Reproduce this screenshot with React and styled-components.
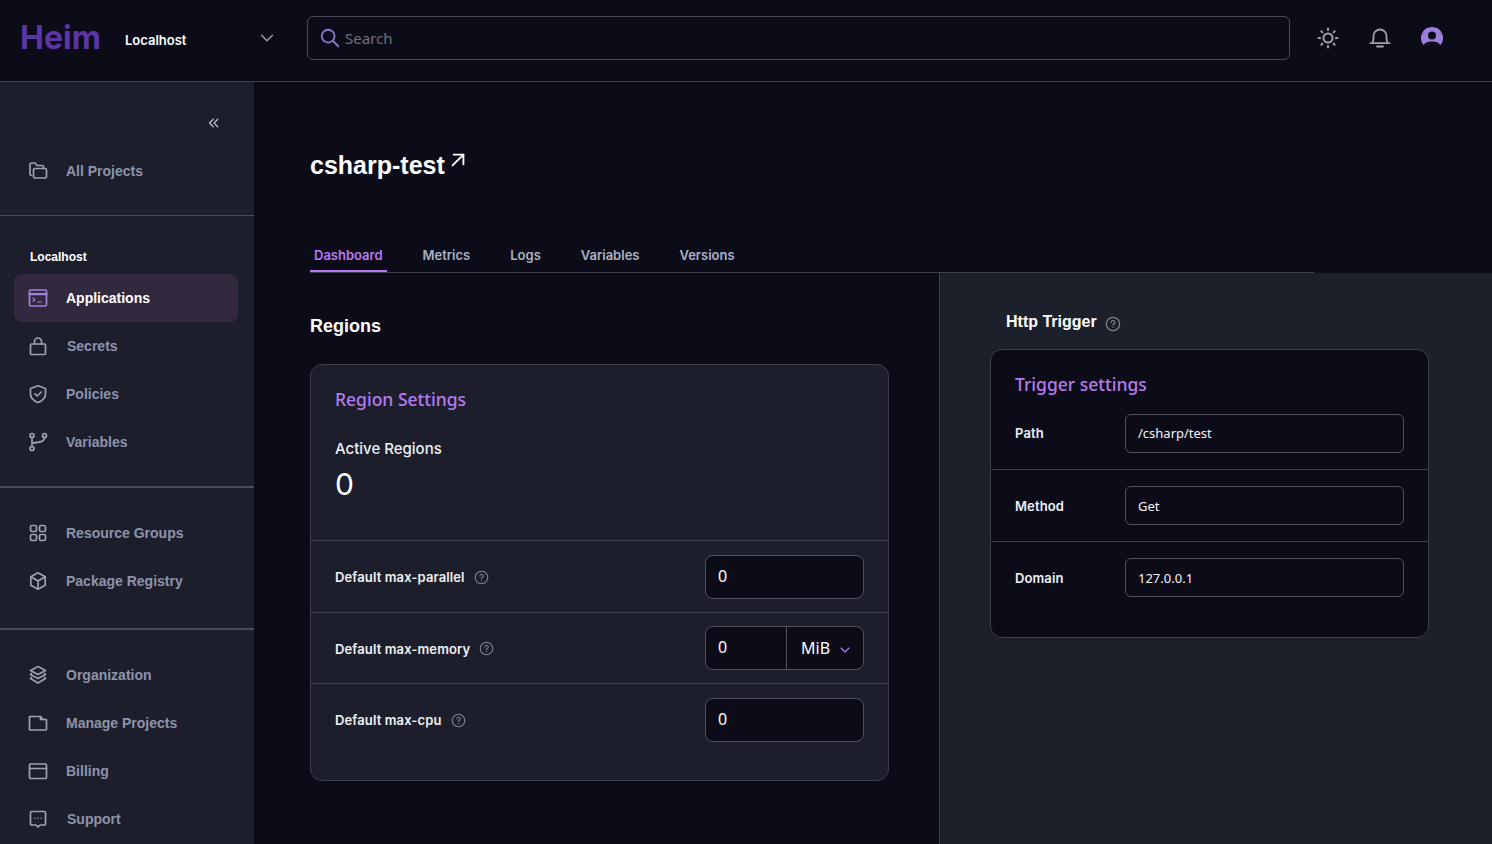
import React from "react";
import styled, { createGlobalStyle } from "styled-components";
import { TbChevronDown, TbChevronsLeft, TbSearch, TbArrowUpRight } from "react-icons/tb";

const Global = createGlobalStyle`
  html, body { margin: 0; padding: 0; height: 100%; overflow: hidden; background: #0c0c18; }
  * { box-sizing: border-box; }
  body { font-family: Inter, "Liberation Sans", sans-serif; color: #fff; }
`;
const ARIAL = `"Liberation Sans", Inter, sans-serif`;
const NOTO = `"Noto Sans", Inter, sans-serif`;

const Page = styled.div`display: flex; flex-direction: column; height: 844px; overflow: hidden;`;
const Header = styled.header`
  flex: none; height: 82px; padding-bottom: 6px; display: flex; align-items: center; border-bottom: 1px solid #3f3f4c; background: #0c0c18;
`;
const Logo = styled.div`width: 125px; padding-left: 20px; font-size: 32px; font-weight: 700; color: #5a35a6;`;
const EnvPicker = styled.div`
  width: 182px; padding: 4px 29px 0 0; display: flex; align-items: center; justify-content: space-between;
  font-size: 13px; font-weight: 600;
  svg { color: #a0a0ac; margin-top: -4px; stroke-width: 1.5; }
`;
const SearchBox = styled.div`
  width: 983px; height: 44px; display: flex; align-items: center; gap: 4px; padding: 0 11px;
  border: 1px solid #4a4a56; border-radius: 6px; color: #70707c; font-size: 15px; font-family: ${NOTO};
  svg { color: #8f74d0; }
`;
const HeaderIcons = styled.div`
  margin-left: 26px; display: flex; gap: 28px; color: #a1a1ad;
  svg { display: block; }
`;
const Body = styled.div`flex: 1; min-height: 0; display: flex;`;
const Sidebar = styled.aside`flex: none; width: 254px; background: #1c1f2b; display: flex; flex-direction: column;`;
const Collapse = styled.div`
  height: 65px; display: flex; justify-content: flex-end; align-items: flex-end; padding: 0 31px 15px 0; color: #c4c4cc;
  svg { stroke-width: 1.6; }
`;
const Section = styled.div`
  padding: ${p => p.$pad}; border-bottom: ${p => p.$line || 0}px solid #4a4a58;
`;
const SectionLabel = styled.div`
  padding: 0 0 0 30px; height: 18px; line-height: 18px; font-size: 12px; font-weight: 700; margin-bottom: 8px; font-family: ${ARIAL};
`;
const NavItem = styled.div`
  height: 48px; width: 224px; margin-left: 14px; display: flex; align-items: center; gap: 18px; padding-left: 14px;
  border-radius: 8px; font-size: 14px; font-weight: 700; font-family: ${ARIAL};
  color: ${p => (p.$active ? "#fff" : "#8e93ab")};
  background: ${p => (p.$active ? "#33293f" : "transparent")};
  svg { flex: none; color: ${p => (p.$active ? "#a181de" : "#a0a0ad")}; }
`;
const NavText = styled.span`margin-left: ${p => p.$nudge || 0}px;`;
const Main = styled.main`flex: 1; min-width: 0; display: flex; flex-direction: column;`;
const TitleRow = styled.div`
  flex: none; height: 160px; padding: 67px 0 0 56px; display: flex; align-items: flex-start;
`;
const Title = styled.h1`margin: 0; font-size: 25px; line-height: 32px; font-weight: 700; font-family: ${ARIAL};`;
const TitleLink = styled.span`
  margin: -2px 0 0 0; color: #fff; svg { display: block; stroke-width: 1.7; }
`;
const Tabs = styled.nav`
  flex: none; margin-left: 56px; width: 1004px; height: 31px; display: flex; gap: 32px; border-bottom: 1px solid #3f3f4c;
`;
const Tab = styled.div`
  height: 30px; padding: 4px 4px 0; font-size: 13px; line-height: 18px; font-weight: 600;
  color: ${p => (p.$active ? "#b77af0" : "#a9b3c6")};
  border-bottom: 2px solid ${p => (p.$active ? "#b77af0" : "transparent")};
`;
const Split = styled.div`flex: 1; min-height: 0; display: flex;`;
const Left = styled.section`flex: none; width: 685px; padding: 40px 50px 0 56px;`;
const Right = styled.section`
  flex: 1; min-width: 0; background: #1c202b; border-left: 1px solid #3f3f4c; padding: 36px 63px 0 50px;
`;
const H2 = styled.h2`margin: 0 0 25px; font-size: 18px; line-height: 26px; font-weight: 700; font-family: ${ARIAL};`;
const Card = styled.div`
  border: 1px solid #3f3f4c; border-radius: 12px; overflow: hidden; background: ${p => p.$bg};
  height: ${p => p.$h}px;
`;
const CardTitle = styled.div`font-size: 17.5px; line-height: 24px; font-weight: 500; color: #b77af0; font-family: ${NOTO};`;
const CardHead = styled.div`height: 175px; padding: 22px 24px 0;`;
const StatLabel = styled.div`margin-top: 26px; font-size: 15px; line-height: 24px; font-weight: 500; color: #eef0f4;`;
const StatValue = styled.div`font-size: 30px; line-height: 46px; font-weight: 400;`;
const SetRow = styled.div`
  height: ${p => p.$h}px; padding: 0 24px; display: flex; align-items: center; justify-content: space-between;
  border-top: 1px solid #3f3f4c;
`;
const SetLabel = styled.div`
  display: flex; align-items: center; gap: 9px; font-size: 13px; font-weight: 600; color: #eef0f4; margin-top: 1px; letter-spacing: 0.12px;
  svg { color: #83838f; display: block; }
`;
const NumInput = styled.div`
  width: 159px; height: 44px; border: 1px solid #52525e; border-radius: 8px; background: #0c0c18;
  display: flex; align-items: center; font-size: 16px; overflow: hidden; font-family: ${NOTO};
`;
const NumValue = styled.span`flex: 1; padding: 0 0 2px 12px;`;
const Unit = styled.span`
  flex: none; width: 77px; height: 100%; display: flex; align-items: center; gap: 7px; padding-left: 14px; border-left: 1px solid #52525e; font-size: 16px;
  svg { color: #b77af0; margin-top: 3px; stroke-width: 1.6; }
`;
const TriggerHead = styled.div`
  display: flex; align-items: center; gap: 8px; margin: 0 0 14px 16px; height: 26px;
  font-size: 16px; font-weight: 700; font-family: ${ARIAL};
  svg { color: #83838f; display: block; margin-top: 3px; }
`;
const TriggerTitleWrap = styled.div`height: 63px; padding: 22px 24px 0;`;
const TriggerRow = styled.div`
  display: grid; grid-template-columns: 110px 1fr; align-items: center; padding: 0 24px; height: ${p => p.$h}px;
  border-top: ${p => (p.$line ? "1px solid #3f3f4c" : "0")}; padding-bottom: ${p => p.$pb || 0}px;
`;
const TriggerLabel = styled.div`font-size: 13px; font-weight: 600; color: #eef0f4; letter-spacing: 0.12px;`;
const TextField = styled.div`
  height: 39px; border: 1px solid #52525e; border-radius: 6px; padding: 0 12px; display: flex; align-items: center; font-size: 13px; color: #f4f4f6; font-family: ${NOTO};
`;

const stroke = { fill: "none", stroke: "currentColor", strokeWidth: 1.7, strokeLinecap: "round", strokeLinejoin: "round" };
const Icon = ({ children }) => <svg width="20" height="20" viewBox="0 0 20 20" {...stroke}>{children}</svg>;

const Folders = () => (
  <Icon>
    <path d="M3.5 14.5A1.5 1.5 0 0 1 2 13V3.5A1.5 1.5 0 0 1 3.5 2H7l2 2.5h5A1.5 1.5 0 0 1 15.5 6v1.5" />
    <rect x="5.5" y="7.5" width="13" height="9.5" rx="1.5" />
  </Icon>
);
const Terminal = () => (
  <Icon>
    <rect x="1.5" y="2" width="17" height="16" rx="1.5" />
    <path d="M1.5 6.2h17" strokeWidth="2.2" />
    <path d="M5 10l2 1.7-2 1.7M9.5 14h4" strokeWidth="1.2" />
  </Icon>
);
const Bag = () => (
  <Icon>
    <rect x="2.5" y="8" width="15" height="10.5" rx="1" />
    <path d="M6.5 8V5.5a3.5 3.5 0 0 1 7 0V8" />
  </Icon>
);
const Shield = () => (
  <Icon>
    <path d="M10 1.8l7.5 2.7V10c0 4.5-3.5 7-7.5 8.5-4-1.5-7.5-4-7.5-8.5V4.5z" />
    <path d="M7 9.8l2.2 2.2 4-4" />
  </Icon>
);
const Branch = () => (
  <Icon>
    <circle cx="4" cy="3.5" r="2" /><circle cx="16.5" cy="3.5" r="2" /><circle cx="4" cy="16.5" r="2" />
    <path d="M4 5.5v9M16.5 5.5c0 3.5-3 5-12.5 5.5" />
  </Icon>
);
const Grid = () => (
  <Icon>
    <rect x="2.5" y="2.5" width="6" height="6" rx="1.5" /><rect x="11.5" y="2.5" width="6" height="6" rx="1.5" />
    <rect x="2.5" y="11.5" width="6" height="6" rx="1.5" /><rect x="11.5" y="11.5" width="6" height="6" rx="1.5" />
  </Icon>
);
const Cube = () => (
  <Icon>
    <path d="M10 1.8l7.2 4v8.4l-7.2 4-7.2-4V5.800z" />
    <path d="M2.800 5.800L10 10l7.200-4.200M10 10v8.200" />
  </Icon>
);
const Layers = () => (
  <Icon>
    <path d="M10 1.500l7.500 4-7.500 4-7.500-4z" />
    <path d="M3.500 8.500L2.500 9.500l7.500 4 7.500-4-1-1" />
    <path d="M3.500 12.500l-1 1 7.500 4.500 7.500-4.500-1-1" />
  </Icon>
);
const FolderCorner = () => (
  <Icon>
    <path d="M1.500 3.500h11l3 3h3v9.500a1 1 0 0 1-1 1H2.500a1 1 0 0 1-1-1z" />
    <path d="M12.500 3.500v3h3" />
  </Icon>
);
const Billing = () => (
  <Icon>
    <rect x="1.500" y="3" width="17" height="14.500" rx="1" /><path d="M1.500 7.500h17" />
  </Icon>
);
const Support = () => (
  <Icon>
    <path d="M3.500 2.500h13a1 1 0 0 1 1 1V15a1 1 0 0 1-1 1H12l-2 2-2-2H3.500a1 1 0 0 1-1-1V3.500a1 1 0 0 1 1-1z" />
    <path d="M7 9.200h0M10 9.200h0M13 9.200h0" strokeWidth="1.500" />
  </Icon>
);
const Sun = () => (
  <svg width="24" height="24" viewBox="0 0 24 24" fill="none" stroke="currentColor" strokeWidth="2" strokeLinecap="round">
    <circle cx="12" cy="12" r="4.500" />
    <path d="M12 2.500v1.500M12 20v1.500M2.500 12H4M20 12h1.500M5.300 5.300l1.100 1.100M17.600 17.600l1.100 1.100M5.300 18.700l1.100-1.100M17.600 6.400l1.100-1.100" />
  </svg>
);
const Bell = () => (
  <svg width="24" height="24" viewBox="0 0 24 24" fill="none" stroke="currentColor" strokeWidth="1.800" strokeLinecap="round">
    <path d="M4.500 17c1-1.500 1-3 1-7a6.500 6.500 0 0 1 13 0c0 4 0 5.500 1 7" />
    <path d="M2.500 17.200h19M9 20.500h6" />
  </svg>
);
const Avatar = () => (
  <svg width="24" height="24" viewBox="0 0 24 24">
    <path fill="#9b7fdc" d="M12 1a11 11 0 0 0-8.300 18.200C5 16.700 8 15.600 12 15.600s7 1.100 8.300 3.600A11 11 0 0 0 12 1z" />
    <circle cx="12" cy="9.500" r="4" fill="#0c0c18" />
  </svg>
);
const Help = ({ size = 16 }) => (
  <svg width={size} height={size} viewBox="0 0 16 16" fill="none" stroke="currentColor" strokeWidth="1.200" strokeLinecap="round">
    <circle cx="8" cy="8" r="6.700" />
    <path d="M6.300 6.300a1.800 1.800 0 1 1 2.600 1.600c-.6.300-.9.700-.9 1.300M8 11.300v.1" />
  </svg>
);

const Row = ({ icon, children, active, nudge }) => (
  <NavItem $active={active}>{icon}<NavText $nudge={nudge}>{children}</NavText></NavItem>
);

export default function App() {
  return (
    <Page>
      <Global />
      <Header>
        <Logo>Heim</Logo>
        <EnvPicker><span>Localhost</span><TbChevronDown size={22} /></EnvPicker>
        <SearchBox><TbSearch size={22} /><span>Search</span></SearchBox>
        <HeaderIcons><Sun /><Bell /><Avatar /></HeaderIcons>
      </Header>
      <Body>
        <Sidebar>
          <Collapse><TbChevronsLeft size={18} /></Collapse>
          <Section $pad="0 0 20px" $line={1}><Row icon={<Folders />}>All Projects</Row></Section>
          <Section $pad="32px 0 20px" $line={2}>
            <SectionLabel>Localhost</SectionLabel>
            <Row active icon={<Terminal />}>Applications</Row>
            <Row nudge={1} icon={<Bag />}>Secrets</Row>
            <Row icon={<Shield />}>Policies</Row>
            <Row icon={<Branch />}>Variables</Row>
          </Section>
          <Section $pad="21px 0 23px" $line={2}>
            <Row icon={<Grid />}>Resource Groups</Row>
            <Row icon={<Cube />}>Package Registry</Row>
          </Section>
          <Section $pad="21px 0 0">
            <Row icon={<Layers />}>Organization</Row>
            <Row icon={<FolderCorner />}>Manage Projects</Row>
            <Row icon={<Billing />}>Billing</Row>
            <Row nudge={1} icon={<Support />}>Support</Row>
          </Section>
        </Sidebar>
        <Main>
          <TitleRow>
            <Title>csharp-test</Title>
            <TitleLink><TbArrowUpRight size={26} /></TitleLink>
          </TitleRow>
          <Tabs>
            <Tab $active>Dashboard</Tab><Tab>Metrics</Tab><Tab>Logs</Tab><Tab>Variables</Tab><Tab>Versions</Tab>
          </Tabs>
          <Split>
            <Left>
              <H2>Regions</H2>
              <Card $bg="#1c1f2b" $h={417}>
                <CardHead>
                  <CardTitle>Region Settings</CardTitle>
                  <StatLabel>Active Regions</StatLabel>
                  <StatValue>0</StatValue>
                </CardHead>
                <SetRow $h={72}>
                  <SetLabel>Default max-parallel <Help size={15} /></SetLabel>
                  <NumInput><NumValue>0</NumValue></NumInput>
                </SetRow>
                <SetRow $h={71}>
                  <SetLabel>Default max-memory <Help size={15} /></SetLabel>
                  <NumInput><NumValue>0</NumValue><Unit>MiB <TbChevronDown size={16} /></Unit></NumInput>
                </SetRow>
                <SetRow $h={72}>
                  <SetLabel>Default max-cpu <Help size={15} /></SetLabel>
                  <NumInput><NumValue>0</NumValue></NumInput>
                </SetRow>
              </Card>
            </Left>
            <Right>
              <TriggerHead>Http Trigger <Help size={16} /></TriggerHead>
              <Card $bg="#0c0c18" $h={289}>
                <TriggerTitleWrap><CardTitle>Trigger settings</CardTitle></TriggerTitleWrap>
                <TriggerRow $h={56} $pb={16}><TriggerLabel>Path</TriggerLabel><TextField>/csharp/test</TextField></TriggerRow>
                <TriggerRow $h={72} $line><TriggerLabel>Method</TriggerLabel><TextField>Get</TextField></TriggerRow>
                <TriggerRow $h={72} $line><TriggerLabel>Domain</TriggerLabel><TextField>127.0.0.1</TextField></TriggerRow>
              </Card>
            </Right>
          </Split>
        </Main>
      </Body>
    </Page>
  );
}
